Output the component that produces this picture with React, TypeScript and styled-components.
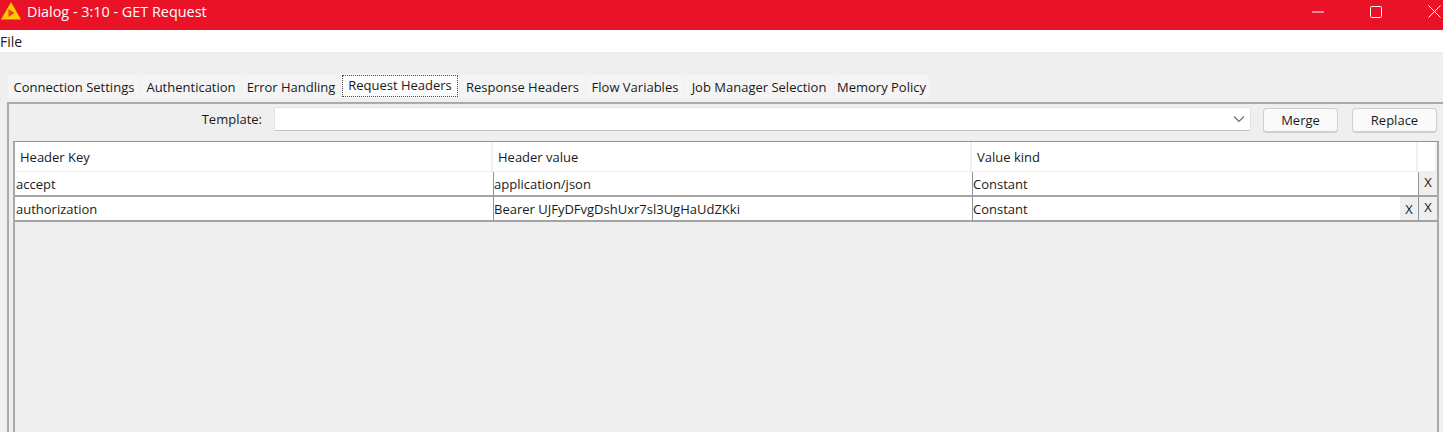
import styled, { createGlobalStyle } from "styled-components";

const GlobalStyle = createGlobalStyle`
  html, body {
    margin: 0;
    padding: 0;
    background: #efefef;
    overflow: hidden;
  }
`;

const TABS = [
  { label: "Connection Settings", width: 132 },
  { label: "Authentication", width: 100 },
  { label: "Error Handling", width: 98 },
  { label: "Request Headers", width: 118, active: true },
  { label: "Response Headers", width: 125 },
  { label: "Flow Variables", width: 98 },
  { label: "Job Manager Selection", width: 148 },
  { label: "Memory Policy", width: 95 },
];

const ROWS = [
  { key: "accept", value: "application/json", kind: "Constant", editing: false },
  {
    key: "authorization",
    value: "Bearer UJFyDFvgDshUxr7sl3UgHaUdZKki",
    kind: "Constant",
    editing: true,
  },
];

const Window = styled.div`
  width: 1443px;
  height: 432px;
  overflow: hidden;
  display: flex;
  flex-direction: column;
  background: #efefef;
  color: #1a1a1a;
  font-family: "Open Sans", "Noto Sans", sans-serif;
  font-size: 13px;
`;

const TitleBar = styled.div`
  height: 30px;
  flex-shrink: 0;
  display: flex;
  align-items: center;
  background: #ea1226;
  color: #fff;
  padding-left: 1px;
  padding-bottom: 9px;
  box-sizing: border-box;
`;

const TitleText = styled.span`
  margin-left: 4px;
  margin-top: 2px;
  font-size: 14.4px;
`;

const WindowButtons = styled.div`
  margin-left: auto;
  margin-right: -20px;
  margin-top: 2px;
  display: flex;
  align-items: center;
`;

const WindowButton = styled.div`
  width: 58px;
  display: flex;
  align-items: center;
  justify-content: center;
`;

const MenuBar = styled.div`
  height: 22px;
  flex-shrink: 0;
  background: #fff;
  display: flex;
  align-items: center;
  font-size: 14px;
`;

const Body = styled.div`
  flex: 1;
  display: flex;
  flex-direction: column;
  padding: 22px 0 0 7px;
  min-height: 0;
`;

const TabStrip = styled.div`
  display: flex;
  align-items: flex-end;
  height: 24px;
  flex-shrink: 0;
  gap: 1px;
  padding-left: 1px;
`;

const Tab = styled.div<{ $active?: boolean; $width: number }>`
  width: ${(p) => p.$width}px;
  height: ${(p) => (p.$active ? 24 : 23)}px;
  box-sizing: border-box;
  display: flex;
  align-items: center;
  justify-content: center;
  white-space: nowrap;
  background: ${(p) => (p.$active ? "#fdfdfd" : "#f4f4f4")};
  outline: ${(p) => (p.$active ? "1px dotted #444" : "none")};
  outline-offset: -2px;
  padding-bottom: ${(p) => (p.$active ? "3px" : "0")};
`;

const Panel = styled.div`
  flex: 1;
  min-height: 0;
  margin-top: 4px;
  box-sizing: border-box;
  border-top: 2px solid #a9a9ae;
  border-left: 2px solid #a9a9ae;
  padding: 2px 4px 0 4px;
  display: flex;
  flex-direction: column;
`;

const Toolbar = styled.div`
  height: 26px;
  display: flex;
  align-items: center;
  flex-shrink: 0;
`;

const TemplateLabel = styled.label`
  width: 249px;
  text-align: right;
  margin-right: 12px;
  flex-shrink: 0;
`;

const Combo = styled.div`
  width: 977px;
  height: 24px;
  box-sizing: border-box;
  background: #fff;
  border: 1px solid #e2e2e2;
  border-bottom-color: #c4c4c4;
  border-radius: 2px;
  display: flex;
  align-items: center;
  justify-content: flex-end;
  padding-right: 5px;
  flex-shrink: 0;
`;

const PushButton = styled.button<{ $width: number; $left: number }>`
  width: ${(p) => p.$width}px;
  margin-left: ${(p) => p.$left}px;
  margin-top: 2px;
  height: 25px;
  padding: 0;
  box-sizing: border-box;
  background: #fafafa;
  border: 1px solid #cfcfcf;
  border-bottom-width: 2px;
  border-radius: 4px;
  color: inherit;
  font: inherit;
  flex-shrink: 0;
`;

const TableFrame = styled.div`
  margin-top: 9px;
  width: 1426px;
  box-sizing: border-box;
  flex: 1;
  border-top: 1px solid #8f949b;
  border-left: 2px solid #a9a9ae;
  border-right: 2px solid #a9a9ae;
  display: flex;
  flex-direction: column;
  min-height: 0;
`;

const GridRow = styled.div<{ $height: number }>`
  display: grid;
  grid-template-columns: 478px 479px 446px 19px;
  height: ${(p) => p.$height}px;
  box-sizing: border-box;
  flex-shrink: 0;
`;

const HeaderCell = styled.div`
  background: #fff;
  border-right: 2px solid #f0f0f0;
  border-bottom: 1px solid #f0f0f0;
  display: flex;
  align-items: center;
  padding-left: 5px;
  box-sizing: border-box;
`;

const BodyCell = styled.div`
  background: #fff;
  border-bottom: 2px solid #a4a4a4;
  border-left: 1px solid #8f949b;
  display: flex;
  align-items: center;
  box-sizing: border-box;
  white-space: nowrap;
  position: relative;

  &:first-child {
    border-left: none;
    padding-left: 1px;
  }
`;

const CellX = styled.span`
  position: absolute;
  right: 0;
  top: 0;
  bottom: 0;
  width: 18px;
  background: #efefef;
  display: flex;
  align-items: center;
  justify-content: center;
`;

const RemoveCell = styled.div`
  background: #efefef;
  border-left: 1px solid #8f949b;
  border-bottom: 2px solid #a4a4a4;
  box-sizing: border-box;
  display: flex;
  align-items: center;
  justify-content: center;
  padding-bottom: 3px;
`;

const KnimeLogo = () => (
  <svg width="22" height="20" viewBox="0 0 22 20">
    <path d="M10 1 L20 18.5 L0 18.5 Z" fill="#fdc800" />
    <path d="M7.5 8 L13.5 12 L7.5 16 Z" fill="#e8401c" />
  </svg>
);

const ChevronIcon = () => (
  <svg width="12" height="8" viewBox="0 0 12 8">
    <path d="M1 1.5 L6 6.5 L11 1.5" fill="none" stroke="#6e6e6e" strokeWidth="1.2" />
  </svg>
);

export default function App() {
  return (
    <>
      <GlobalStyle />
      <Window>
        <TitleBar>
          <KnimeLogo />
          <TitleText>Dialog - 3:10 - GET Request</TitleText>
          <WindowButtons>
            <WindowButton>
              <svg width="12" height="2" viewBox="0 0 12 2">
                <path d="M0 1 H12" stroke="#fff" strokeWidth="1" />
              </svg>
            </WindowButton>
            <WindowButton>
              <svg width="12" height="12" viewBox="0 0 12 12">
                <rect x="0.5" y="0.5" width="11" height="11" rx="1" fill="none" stroke="#fff" />
              </svg>
            </WindowButton>
            <WindowButton>
              <svg width="13" height="13" viewBox="0 0 13 13">
                <path d="M0.5 0.5 L12.5 12.5 M12.5 0.5 L0.5 12.5" stroke="#fff" strokeWidth="1" />
              </svg>
            </WindowButton>
          </WindowButtons>
        </TitleBar>
        <MenuBar>File</MenuBar>
        <Body>
          <TabStrip>
            {TABS.map((tab) => (
              <Tab key={tab.label} $active={tab.active} $width={tab.width}>
                {tab.label}
              </Tab>
            ))}
          </TabStrip>
          <Panel>
            <Toolbar>
              <TemplateLabel>Template:</TemplateLabel>
              <Combo>
                <ChevronIcon />
              </Combo>
              <PushButton $width={75} $left={12}>
                Merge
              </PushButton>
              <PushButton $width={85} $left={14}>
                Replace
              </PushButton>
            </Toolbar>
            <TableFrame>
              <GridRow $height={30}>
                <HeaderCell>Header Key</HeaderCell>
                <HeaderCell>Header value</HeaderCell>
                <HeaderCell>Value kind</HeaderCell>
                <HeaderCell />
              </GridRow>
              {ROWS.map((row) => (
                <GridRow key={row.key} $height={25}>
                  <BodyCell>{row.key}</BodyCell>
                  <BodyCell>{row.value}</BodyCell>
                  <BodyCell>
                    {row.kind}
                    {row.editing && <CellX>X</CellX>}
                  </BodyCell>
                  <RemoveCell>X</RemoveCell>
                </GridRow>
              ))}
            </TableFrame>
          </Panel>
        </Body>
      </Window>
    </>
  );
}
